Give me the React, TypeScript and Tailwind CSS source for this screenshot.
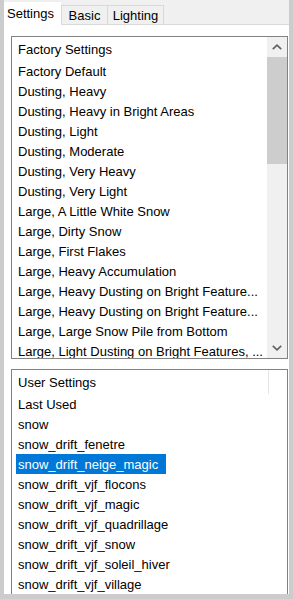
import React from 'react';

const factoryItems = [
  'Factory Default',
  'Dusting, Heavy',
  'Dusting, Heavy in Bright Areas',
  'Dusting, Light',
  'Dusting, Moderate',
  'Dusting, Very Heavy',
  'Dusting, Very Light',
  'Large, A Little White Snow',
  'Large, Dirty Snow',
  'Large, First Flakes',
  'Large, Heavy Accumulation',
  'Large, Heavy Dusting on Bright Feature...',
  'Large, Heavy Dusting on Bright Feature...',
  'Large, Large Snow Pile from Bottom',
  'Large, Light Dusting on Bright Features, ...',
];

const userItems = [
  'Last Used',
  'snow',
  'snow_drift_fenetre',
  'snow_drift_neige_magic',
  'snow_drift_vjf_flocons',
  'snow_drift_vjf_magic',
  'snow_drift_vjf_quadrillage',
  'snow_drift_vjf_snow',
  'snow_drift_vjf_soleil_hiver',
  'snow_drift_vjf_village',
];

const Chevron = ({ down }: { down?: boolean }) => (
  <svg width="10" height="6" viewBox="0 0 10 6" className={down ? 'rotate-180' : ''}>
    <polyline points="0.8,5.2 5,1.2 9.2,5.2" fill="none" stroke="#606060" strokeWidth="1.6" />
  </svg>
);

const App: React.FC = () => {
  return (
    <div className="w-[293px] h-[599px] bg-[#cccccc] px-[4px] pb-[5px] overflow-hidden font-['Liberation_Sans',Arial,sans-serif] text-[13px] text-black leading-none">
      <div className="h-full flex flex-col bg-[#f0f0f0]">
        {/* Tabs */}
        <div className="h-[24px] flex items-end shrink-0">
          <div className="relative z-10 -mb-px h-[23px] w-[57px] bg-white pl-[3px] flex items-center">Settings</div>
          <div className="h-[19px] w-[47px] border border-b-0 border-[#d9d9d9] flex items-center justify-center">Basic</div>
          <div className="h-[19px] w-[56px] border-t border-r border-[#d9d9d9] flex items-center justify-center">Lighting</div>
        </div>

        {/* Panel */}
        <div className="flex-1 min-h-0 bg-white border-t border-[#d9d9d9] pl-[7px] pr-[1px] pt-[11px] flex flex-col overflow-hidden">
          {/* Factory list */}
          <div className="h-[323px] shrink-0 border border-[#828282] flex overflow-hidden">
            <div className="flex-1 min-w-0 overflow-hidden">
              <div className="h-[24px] pl-[6px] flex items-center whitespace-nowrap">Factory Settings</div>
              {factoryItems.map((item, i) => (
                <div key={i} className="h-[20px] pl-[6px] flex items-center whitespace-nowrap">{item}</div>
              ))}
            </div>
            <div className="w-[20px] bg-[#f0f0f0] flex flex-col shrink-0">
              <div className="h-[20px] flex items-center justify-center"><Chevron /></div>
              <div className="flex-1">
                <div className="h-[107px] bg-[#cdcdcd]"></div>
              </div>
              <div className="h-[20px] flex items-center justify-center"><Chevron down /></div>
            </div>
          </div>

          {/* User list */}
          <div className="mt-[10px] flex-1 min-h-0 border border-b-0 border-[#828282] overflow-hidden">
            <div className="h-[24px] flex">
              <div className="w-[257px] border-r border-[#e5e5e5] pl-[6px] flex items-center whitespace-nowrap">User Settings</div>
            </div>
            {userItems.map((item, i) => (
              <div key={i} className="h-[20px] flex items-center whitespace-nowrap">
                {item === 'snow_drift_neige_magic' ? (
                  <span className="ml-[4px] h-[20px] pl-[2px] pr-[8px] bg-[#0078d7] text-white flex items-center">{item}</span>
                ) : (
                  <span className="pl-[6px]">{item}</span>
                )}
              </div>
            ))}
          </div>
        </div>
      </div>
    </div>
  );
};

export default App;
